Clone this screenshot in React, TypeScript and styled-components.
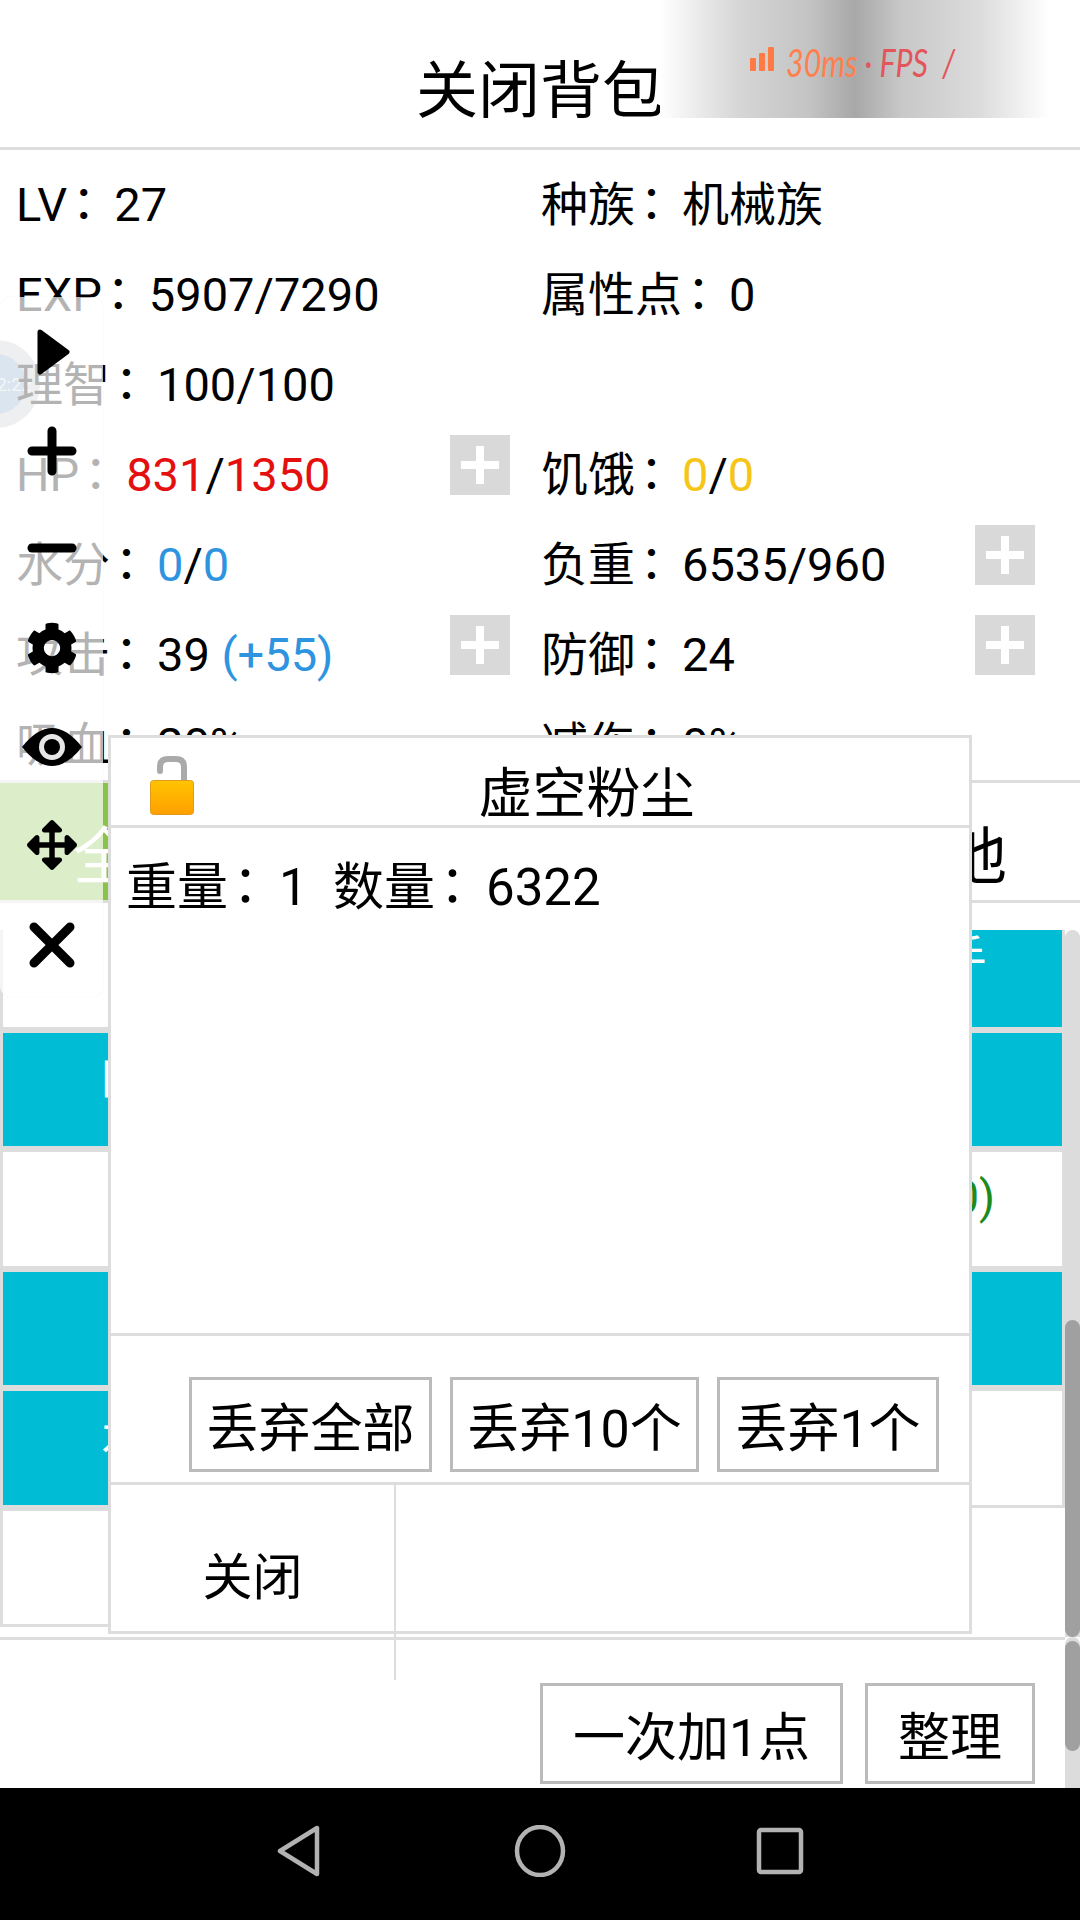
import styled, { createGlobalStyle } from 'styled-components'
import { FaCog, FaArrowsAlt } from 'react-icons/fa'

const GlobalStyle = createGlobalStyle`
  html, body {
    margin: 0;
    padding: 0;
    background: #fff;
  }
  * {
    box-sizing: border-box;
  }
`

const line = '#dddddd'
const buttonLine = '#bbbbbb'

const Screen = styled.div`
  position: relative;
  width: 1080px;
  height: 1920px;
  overflow: hidden;
  display: flex;
  flex-direction: column;
  background: #fff;
  color: #000;
  font-family: Roboto, "Noto Sans CJK SC", sans-serif;
`
const Header = styled.div`
  height: 150px;
  border-bottom: 3px solid ${line};
  display: flex;
  justify-content: center;
  padding-top: 50px;
  font-size: 62px;
  line-height: 84px;
`
const NetBadge = styled.div`
  position: absolute;
  left: 660px;
  top: 0;
  width: 390px;
  height: 118px;
  display: flex;
  align-items: flex-start;
  gap: 12px;
  padding: 47px 0 0 90px;
  background: linear-gradient(90deg, #fff 0%, #d6d6d6 20%, #c4c4c4 38%, #a8a8a8 50%, #c8c8c8 62%, #dcdcdc 82%, #fff 100%);
`
const NetBars = styled.svg`
  width: 24px;
  height: 24px;
  flex: none;
`
const NetText = styled.span`
  display: inline-block;
  font-family: Lato, sans-serif;
  font-weight: 400;
  font-style: italic;
  font-size: 38px;
  line-height: 30px;
  white-space: pre;
  color: #e2555a;
  transform: scaleX(0.8);
  transform-origin: left center;
  span {
    color: #ff7f4d;
  }
`
const Stats = styled.div`
  position: relative;
  z-index: 1;
  height: 630px;
  overflow: hidden;
  padding-top: 10px;
  display: grid;
  grid-template-columns: 525px 525px;
  grid-auto-rows: 90px;
  font-size: 47px;
`
const Stat = styled.div`
  display: flex;
  justify-content: space-between;
  align-items: flex-start;
  padding: 0 15px 0 16px;
  line-height: 90px;
  white-space: pre;
`
const Colon = styled.span`
  font-family: "Noto Sans CJK TC", sans-serif;
  line-height: 0;
  margin: 0 7px 0 -7px;
`
const Value = styled.span<{ $color: string }>`
  color: ${p => p.$color};
`
const PlusBox = styled.div`
  width: 60px;
  height: 60px;
  margin-top: 5px;
  background: #d9d9d9;
  position: relative;
  &::before, &::after {
    content: '';
    position: absolute;
    background: #fff;
  }
  &::before {
    left: 11px;
    right: 11px;
    top: 26px;
    height: 8px;
  }
  &::after {
    top: 11px;
    bottom: 11px;
    left: 26px;
    width: 8px;
  }
`
const Tabs = styled.div`
  height: 123px;
  border-top: 3px solid ${line};
  border-bottom: 3px solid ${line};
  display: grid;
  grid-template-columns: repeat(4, 270px);
`
const Tab = styled.div<{ $active?: boolean }>`
  display: flex;
  align-items: center;
  justify-content: center;
  padding-top: 20px;
  font-size: 62px;
  color: ${p => (p.$active ? '#fff' : '#000')};
  background: ${p => (p.$active ? '#8bc34a' : 'transparent')};
`
const ListArea = styled.div`
  height: 734px;
  padding-top: 27px;
  display: flex;
`
const ListClip = styled.div`
  width: 1065px;
  height: 707px;
  overflow: hidden;
`
const ItemGrid = styled.div`
  margin-top: -20px;
  display: grid;
  grid-template-columns: 532.5px 532.5px;
  grid-auto-rows: 119.5px;
`
const Item = styled.div<{ $on?: boolean; $pad?: number; $color?: string }>`
  border: 3px solid ${line};
  background: ${p => (p.$on ? '#00bcd4' : '#fff')};
  color: ${p => p.$color || '#fff'};
  padding: 15px 0 0 ${p => p.$pad || 0}px;
  font-size: 46px;
  line-height: 60px;
`
const Track = styled.div<{ $h: number }>`
  width: 15px;
  height: ${p => p.$h}px;
  flex: none;
  background: #dcdcdc;
  border-radius: 8px 8px 0 0;
`
const Thumb = styled.div<{ $top: number; $h: number }>`
  margin-top: ${p => p.$top}px;
  height: ${p => p.$h}px;
  background: #a0a0a0;
  border-radius: 8px;
`
const BottomBar = styled.div`
  height: 151px;
  display: flex;
`
const BottomActions = styled.div`
  flex: 1;
  border-top: 3px solid ${line};
  display: flex;
  justify-content: flex-end;
  align-items: flex-end;
  gap: 22px;
  padding: 0 30px 4px 0;
`
const Button = styled.div<{ $w: number; $h: number }>`
  width: ${p => p.$w}px;
  height: ${p => p.$h}px;
  border: 3px solid ${buttonLine};
  background: #fff;
  display: flex;
  align-items: center;
  justify-content: center;
  font-size: 52px;
  white-space: nowrap;
`
const NavBar = styled.div`
  height: 132px;
  background: #000;
  display: flex;
  justify-content: center;
  align-items: center;
  padding-bottom: 6px;
`
const NavSlot = styled.div`
  width: 240px;
  display: flex;
  justify-content: center;
`
const NavIcon = styled.svg`
  width: 52px;
  height: 52px;
  fill: none;
  stroke: #b2b2b2;
  stroke-width: 4.5;
  stroke-linejoin: round;
`
const FloatBall = styled.div`
  position: absolute;
  left: -48px;
  top: 340px;
  width: 88px;
  height: 88px;
  border-radius: 50%;
  background: #c6c8ce;
  display: flex;
  align-items: center;
  justify-content: center;
`
const FloatFace = styled.div`
  width: 60px;
  height: 60px;
  border-radius: 50%;
  background: #87a8c9;
  color: rgba(255, 255, 255, 0.7);
  font-size: 18px;
  display: flex;
  align-items: center;
  justify-content: center;
  white-space: nowrap;
  padding-left: 26px;
`
const ToolPanel = styled.div`
  position: absolute;
  z-index: 2;
  left: 0;
  top: 297px;
  width: 103px;
  height: 700px;
  display: flex;
  flex-direction: column;
  background: rgba(255, 255, 255, 0.7);
  border-radius: 10px;
  box-shadow: 0 0 1px rgba(0, 0, 0, 0.12);
`
const ToolSlot = styled.div<{ $down?: number; $up?: number }>`
  height: 100px;
  flex: none;
  display: flex;
  align-items: center;
  justify-content: center;
  color: #000;
  padding: ${p => p.$down || 0}px 0 ${p => p.$up || 0}px;
`
const ToolSvg = styled.svg`
  width: 50px;
  height: 50px;
  fill: #000;
  stroke: #000;
  stroke-width: 12;
  stroke-linecap: round;
  stroke-linejoin: round;
`
const EyeSvg = styled.svg`
  width: 60px;
  height: 38px;
`
const Modal = styled.div`
  position: absolute;
  z-index: 3;
  left: 108px;
  top: 735px;
  width: 864px;
  height: 899px;
  border: 3px solid ${line};
  background: #fff;
  display: flex;
  flex-direction: column;
`
const ModalHead = styled.div`
  height: 90px;
  flex: none;
  border-bottom: 3px solid ${line};
  display: flex;
  padding: 17px 0 0 39px;
`
const LockIcon = styled.svg`
  width: 44px;
  height: 60px;
  flex: none;
`
const ModalTitle = styled.div`
  flex: 1;
  text-align: center;
  font-size: 54px;
  line-height: 72px;
  padding-left: 10px;
  margin-top: 4px;
  height: 66px;
  overflow: hidden;
`
const ModalBody = styled.div`
  flex: 1;
  padding: 25px 15px 0;
  font-size: 51px;
  line-height: 70px;
  white-space: pre;
`
const ModalColon = styled.span`
  font-family: "Noto Sans CJK TC", sans-serif;
  line-height: 0;
  margin: 0 8px 0 -8px;
`
const ModalActions = styled.div`
  height: 152px;
  flex: none;
  border-top: 3px solid ${line};
  border-bottom: 3px solid ${line};
  display: flex;
  justify-content: flex-end;
  align-items: flex-end;
  gap: 18px;
  padding: 0 30px 10px 0;
`
const ModalFooter = styled.div`
  height: 146px;
  flex: none;
  display: flex;
`
const CloseCell = styled.div`
  width: 285px;
  height: 195px;
  flex: none;
  border-right: 2px solid ${line};
  display: flex;
  justify-content: center;
  padding-top: 58px;
  font-size: 50px;
  line-height: 70px;
`

const items = [
  { on: false },
  { on: true, text: '手', pad: 405 },
  { on: true, text: '口', pad: 96 },
  { on: true },
  { on: false },
  { on: false, text: '(+10)', pad: 350, color: '#1c8a1c' },
  { on: true },
  { on: true },
  { on: true, text: '水', pad: 98 },
  { on: false },
  { on: false },
]

export default function App() {
  return (
    <Screen>
      <GlobalStyle />
      <Header>关闭背包</Header>
      <NetBadge>
        <NetBars viewBox="0 0 24 24">
          <rect x="0" y="11" width="6" height="13" rx="1" fill="#ff7a45" />
          <rect x="9" y="6" width="6" height="18" rx="1" fill="#ff7a45" />
          <rect x="18" y="0" width="6" height="24" rx="1" fill="#ff7a45" />
        </NetBars>
        <NetText><span>30ms</span> · FPS  /</NetText>
      </NetBadge>
      <FloatBall>
        <FloatFace>12:22</FloatFace>
      </FloatBall>

      <Stats>
        <Stat><div>LV<Colon>：</Colon>27</div></Stat>
        <Stat><div>种族<Colon>：</Colon>机械族</div></Stat>
        <Stat><div>EXP<Colon>：</Colon>5907/7290</div></Stat>
        <Stat><div>属性点<Colon>：</Colon>0</div></Stat>
        <Stat><div>理智<Colon>：</Colon>100/100</div></Stat>
        <Stat />
        <Stat>
          <div>HP<Colon>：</Colon><Value $color="#e41010">831</Value>/<Value $color="#e41010">1350</Value></div>
          <PlusBox />
        </Stat>
        <Stat>
          <div>饥饿<Colon>：</Colon><Value $color="#f5c518">0</Value>/<Value $color="#f5c518">0</Value></div>
        </Stat>
        <Stat>
          <div>水分<Colon>：</Colon><Value $color="#2e94e0">0</Value>/<Value $color="#2e94e0">0</Value></div>
        </Stat>
        <Stat>
          <div>负重<Colon>：</Colon>6535/960</div>
          <PlusBox />
        </Stat>
        <Stat>
          <div>攻击<Colon>：</Colon>39 <Value $color="#2e94e0">(+55)</Value></div>
          <PlusBox />
        </Stat>
        <Stat>
          <div>防御<Colon>：</Colon>24</div>
          <PlusBox />
        </Stat>
        <Stat><div>吸血<Colon>：</Colon>20%</div></Stat>
        <Stat><div>减伤<Colon>：</Colon>0%</div></Stat>
      </Stats>

      <Tabs>
        <Tab $active>全部</Tab>
        <Tab>装备</Tab>
        <Tab>材料</Tab>
        <Tab>其他</Tab>
      </Tabs>

      <ListArea>
        <ListClip>
          <ItemGrid>
            {items.map((it, i) => (
              <Item key={i} $on={it.on} $pad={it.pad} $color={it.color}>{it.text}</Item>
            ))}
          </ItemGrid>
        </ListClip>
        <Track $h={707}>
          <Thumb $top={390} $h={317} />
        </Track>
      </ListArea>

      <BottomBar>
        <BottomActions>
          <Button $w={303} $h={101}>一次加1点</Button>
          <Button $w={170} $h={101}>整理</Button>
        </BottomActions>
        <Track $h={151}>
          <Thumb $top={4} $h={110} />
        </Track>
      </BottomBar>

      <NavBar>
        <NavSlot>
          <NavIcon viewBox="0 0 52 52">
            <path d="M43 3 L43 49 L6 26 Z" />
          </NavIcon>
        </NavSlot>
        <NavSlot>
          <NavIcon viewBox="0 0 52 52">
            <ellipse cx="26" cy="26" rx="23" ry="24" />
          </NavIcon>
        </NavSlot>
        <NavSlot>
          <NavIcon viewBox="0 0 52 52">
            <rect x="5" y="5" width="42" height="42" rx="2" />
          </NavIcon>
        </NavSlot>
      </NavBar>

      <ToolPanel>
        <ToolSlot $down={10}>
          <ToolSvg viewBox="0 0 100 100">
            <path d="M26 10 L80 50 L26 90 Z" strokeWidth={10} />
          </ToolSvg>
        </ToolSlot>
        <ToolSlot $down={8}>
          <ToolSvg viewBox="0 0 100 100">
            <path d="M50 10 V90 M10 50 H90" strokeWidth={18} fill="none" />
          </ToolSvg>
        </ToolSlot>
        <ToolSlot $down={2}>
          <ToolSvg viewBox="0 0 100 100">
            <path d="M10 50 H90" strokeWidth={18} fill="none" />
          </ToolSvg>
        </ToolSlot>
        <ToolSlot $down={2}><FaCog size={52} /></ToolSlot>
        <ToolSlot>
          <EyeSvg viewBox="0 0 60 38">
            <path d="M0 19 Q15 0 30 0 Q45 0 60 19 Q45 38 30 38 Q15 38 0 19 Z" fill="#000" />
            <circle cx="30" cy="19" r="13" fill="#e6e6e6" />
            <circle cx="30" cy="19" r="8" fill="#000" />
          </EyeSvg>
        </ToolSlot>
        <ToolSlot $up={4}><FaArrowsAlt size={50} /></ToolSlot>
        <ToolSlot $up={4}>
          <ToolSvg viewBox="0 0 100 100">
            <path d="M14 14 L86 86 M86 14 L14 86" strokeWidth={18} fill="none" />
          </ToolSvg>
        </ToolSlot>
      </ToolPanel>

      <Modal>
        <ModalHead>
          <LockIcon viewBox="0 0 44 60">
            <defs>
              <linearGradient id="lockBody" x1="0" y1="0" x2="0" y2="1">
                <stop offset="0" stopColor="#ffc400" />
                <stop offset="1" stopColor="#ff9f00" />
              </linearGradient>
            </defs>
            <path d="M10 16 V12 Q10 4 18 4 H26 Q34 4 34 12 V26" fill="none" stroke="#aaaaaa" strokeWidth="6" strokeLinecap="round" />
            <rect x="0.5" y="25.5" width="43" height="34" rx="3" fill="url(#lockBody)" stroke="#e09a20" />
          </LockIcon>
          <ModalTitle>虚空粉尘</ModalTitle>
        </ModalHead>
        <ModalBody>重量<ModalColon>：</ModalColon>1  数量<ModalColon>：</ModalColon>6322</ModalBody>
        <ModalActions>
          <Button $w={243} $h={95}>丢弃全部</Button>
          <Button $w={249} $h={95}>丢弃10个</Button>
          <Button $w={222} $h={95}>丢弃1个</Button>
        </ModalActions>
        <ModalFooter>
          <CloseCell>关闭</CloseCell>
        </ModalFooter>
      </Modal>
    </Screen>
  )
}
